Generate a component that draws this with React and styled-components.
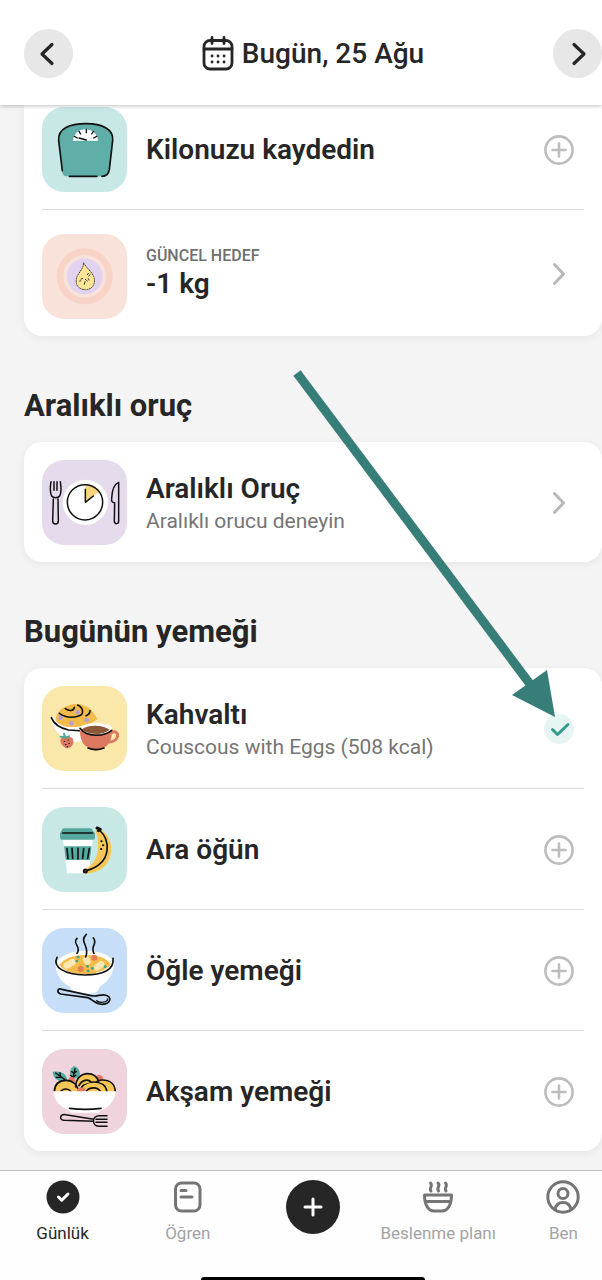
import React, { useState } from "react";
import styled, { createGlobalStyle } from "styled-components";

const GlobalStyle = createGlobalStyle`
  * {
    box-sizing: border-box;
  }

  body {
    margin: 0;
    background: #f4f4f4;
    color: #262626;
    font-family: Roboto, "Noto Sans", "Liberation Sans", sans-serif;
    overflow-x: hidden;
  }

  button {
    font: inherit;
    color: inherit;
    border: none;
    padding: 0;
    background: none;
    cursor: pointer;
  }
`;

const Page = styled.div`
  min-height: 100vh;
  display: flex;
  flex-direction: column;
  overflow: hidden;
`;

const Header = styled.header`
  position: relative;
  z-index: 2;
  display: flex;
  align-items: center;
  justify-content: space-between;
  padding: 29px 0 27px 24px;
  background: #fff;
  box-shadow: 0 1px 4px rgba(0, 0, 0, 0.25);
`;

const RoundButton = styled.button`
  display: flex;
  width: 49px;
  height: 49px;
  border-radius: 50%;
  background: #e7e7e7;
`;

const DateButton = styled.button`
  display: flex;
  align-items: center;
  gap: 8px;
  font-size: 28px;
  font-weight: 500;
  line-height: 36px;
`;

const Content = styled.main`
  position: relative;
  flex: 1;
  padding: 0 0 18px 24px;
`;

const SectionTitle = styled.h2`
  margin: 52px 0 18px;
  font-size: 31px;
  font-weight: 700;
  line-height: 36px;
`;

const Card = styled.section`
  padding: 0 18px;
  background: #fff;
  border-radius: ${({ $continued }) => ($continued ? "0 0 18px 18px" : "18px")};
  box-shadow: 0 2px 10px rgba(0, 0, 0, 0.06);
`;

const Tile = styled.svg`
  flex: none;
  width: 85px;
  height: 85px;
  border-radius: 22px;
  background: ${({ $color }) => $color};
  fill: none;
  stroke-linecap: round;
  stroke-linejoin: round;
`;

const Row = styled.div`
  display: flex;
  align-items: center;
  gap: 19px;
  min-height: ${({ $tall }) => ($tall ? "126px" : "0")};
  padding: ${({ $first }) => ($first ? "2px" : "18px")} 10px 17px 0;
  border-bottom: 1px solid #dedede;

  &:last-child {
    border-bottom: none;
  }

  ${Tile} {
    align-self: flex-end;
  }
`;

const RowText = styled.div`
  flex: 1;
  min-width: 0;
`;

const Eyebrow = styled.div`
  color: #6f6f6f;
  font-size: 16px;
  font-weight: 500;
  line-height: 20px;
  text-transform: uppercase;
`;

const RowTitle = styled.h3`
  margin: 0;
  font-size: 28px;
  font-weight: 600;
  line-height: 36px;
`;

const RowSubtitle = styled.div`
  color: #757575;
  font-size: 21px;
  line-height: 28px;
`;

const ActionButton = styled.button`
  flex: none;
  display: flex;
  width: 30px;
  height: 30px;
  border-radius: 50%;
  background: ${({ $done }) => ($done ? "#e6f5f3" : "none")};
`;

const StrokeIcon = styled.svg`
  display: block;
  flex: none;
  fill: none;
  stroke: ${({ $color }) => $color || "currentColor"};
  stroke-width: ${({ $weight }) => $weight || 3};
  stroke-linecap: round;
  stroke-linejoin: round;
`;

const Pointer = styled.svg`
  position: absolute;
  top: 265px;
  right: 44px;
  pointer-events: none;
`;

const TabBar = styled.nav`
  display: flex;
  flex-direction: column;
  align-items: center;
  gap: 32px;
  background: #fefefe;
  border-top: 1px solid #bdbdbd;
`;

const Tabs = styled.div`
  align-self: stretch;
  display: grid;
  grid-template-columns: repeat(5, 1fr);
  margin-right: -24px;
  padding-top: 9px;
`;

const Tab = styled.button`
  display: flex;
  flex-direction: column;
  align-items: center;
  gap: 8px;
  height: 65px;
  color: ${({ $active }) => ($active ? "#262626" : "#a3a3a3")};
  font-size: 17px;
  line-height: 22px;
  white-space: nowrap;
`;

const HomeIndicator = styled.div`
  width: 224px;
  height: 3px;
  margin-left: 24px;
  border-radius: 3px 3px 0 0;
  background: #000;
`;

const ScaleArt = () => (
  <Tile viewBox="36 36 255 255" $color="#c8e8e6" aria-hidden="true">
    <path fill="#5fafa8" d="M86 130C85 96 122 85 168 85s83 15 81 47l-11 92c-1 13-8 20-20 20H112c-11 0-16-7-17-19z" />
    <path stroke="#111" strokeWidth="5" d="M97 227 86 137C83 99 121 86 168 86s83 16 80 50l-10 88c-2 13-9 20-22 20M118 244h83" />
    <path fill="#fff" d="M129 137c2-21 18-34 37-34s36 13 38 34z" />
    <path stroke="#111" strokeWidth="4" d="m133 124 9 5m5-20 5 8m17-14v10m21-4-5 8m15 7-9 5m-44 0 22 6" />
  </Tile>
);

const GoalArt = () => (
  <Tile viewBox="36 39 255 255" $color="#f9e2da" aria-hidden="true">
    <circle cx="164" cy="166" r="74" stroke="#f8d3c7" strokeWidth="20" />
    <circle cx="164" cy="166" r="54" fill="#e1d3ef" />
    <path fill="#fbe697" stroke="#4a4030" strokeWidth="3" strokeDasharray="3 4" d="M161 126c6 14 27 25 32 47 3 20-9 33-27 33-19 0-30-14-27-32 3-16 20-27 22-48z" />
    <path stroke="#333" strokeWidth="3" d="m154 174 4-2m-8 9 1-4m12 13 2-8m1-7 6 5m3-23-3 4m9-1-5 5m-1 8 2 4" />
  </Tile>
);

const FastingArt = () => (
  <Tile viewBox="36 30 255 255" $color="#e6dbed" aria-hidden="true">
    <circle cx="166" cy="157" r="68" fill="#fff" />
    <path fill="#f7d47e" d="M167 157v-54c15 0 32 7 43 20z" />
    <g stroke="#111" strokeWidth="4.5">
      <circle cx="165" cy="157" r="53" />
      <path d="M166 118v39l24-19" />
      <path d="M63 95c-3 20-3 35 2 43 5 7 19 7 24 0 5-8 5-23 2-43M72 95v26m9-26v26M70 147l-2 65c0 13 17 13 17 0l-1-65" />
      <path d="M266 97v116c0 10-13 11-13 0l1-55c-8 0-10-4-9-13 1-22 7-43 21-48z" />
    </g>
  </Tile>
);

const BreakfastArt = () => (
  <Tile viewBox="36 35 255 255" $color="#f9e8aa" aria-hidden="true">
    <path fill="#fff" d="M64 133c4 34 28 60 69 70l35-5 20-70c-40-20-90-18-124 5z" />
    <path fill="#f2bc4b" d="M76 137c1-25 25-44 57-48 36-3 56 20 70 45-20 15-40 23-67 24-28 1-48-3-60-21z" />
    <g fill="#b5a0d6">
      <circle cx="92" cy="130" r="7" />
      <circle cx="124" cy="147" r="7" />
      <circle cx="143" cy="114" r="7" />
      <circle cx="170" cy="137" r="7" />
    </g>
    <path stroke="#111" strokeWidth="5" d="M64 130c8 20 27 32 52 37l44 3M88 117c17 12 40 14 58 8 18-5 14-25-3-33M106 103c11 8 25 8 27-4M180 109c0 8-4 12-12 15" />
    <path stroke="#dc7960" strokeWidth="9" d="M245 174c24-9 26 27-8 29" />
    <path fill="#dc7960" d="M149 162c1 32 8 50 25 57 12 13 38 13 50 0 16-8 22-28 23-57z" />
    <ellipse cx="198" cy="163" rx="49" ry="17" fill="#fff" />
    <path fill="#8c5838" d="M155 165c22-14 61-14 84 1-20 18-66 16-84-1z" />
    <path stroke="#111" strokeWidth="5" d="M150 162c20 28 73 25 95 6M174 221c14 6 34 5 48 0" />
    <path fill="#dc7960" d="M91 196c7-13 31-14 38-2 5 16-6 27-18 28-10-3-20-12-20-26z" />
    <path stroke="#4da69b" strokeWidth="5" d="m91 187 12 2-1-12 5 13 11-5" />
    <path stroke="#111" strokeWidth="3.5" d="M103 201h1m10-4h1m-8 14h1m9-4h1m-6 10h1" />
  </Tile>
);

const SnackArt = () => (
  <Tile viewBox="36 38 255 255" $color="#c8e8e6" aria-hidden="true">
    <path fill="#fff" d="M99 134h90l-13 103h-65z" />
    <path fill="#55a89e" d="M96 107q0-5 6-5h79q6 0 6 5l8 10v14q0 5-6 5H96q-6 0-6-5v-14zM102 156h83l-5 41h-73z" />
    <path stroke="#111" strokeWidth="5" d="M98 116h90m-77 47 3 29m12-30 2 30m16-30v32m17-31-3 29m20-29-5 29" />
    <path fill="#f6c756" d="M197 108l18 0c19 12 30 34 29 60-3 42-32 69-77 70l-7-8c24-15 40-33 43-60 3-24-1-43-6-62z" />
    <path stroke="#111" strokeWidth="5" d="M208 107c19 17 26 39 23 62-4 31-27 50-61 60" />
    <path stroke="#111" strokeWidth="9" d="m201 101 10 4-6 4" />
    <circle cx="166" cy="230" r="5" fill="#665024" stroke="#111" strokeWidth="5" />
    <path stroke="#111" strokeWidth="6" d="M214 141h1m4 12h1m-7 11h1" />
  </Tile>
);

const LunchArt = () => (
  <Tile viewBox="36 40 255 255" $color="#c6def8" aria-hidden="true">
    <path fill="#fff" d="M77 148c10-24 45-40 89-40 46 0 78 15 87 38-2 32-21 58-44 70-4 16-13 21-44 21-29 0-39-6-45-21-23-10-43-35-43-68z" />
    <path fill="#f3bb48" d="M88 151c14-20 42-30 80-30 36 0 61 9 75 28-29 37-124 41-155 2z" />
    <path stroke="#fbe7b2" strokeWidth="20" d="m110 153 17-10m42-9 3 7m29 17 12-9" />
    <g fill="#e37c57">
      <circle cx="193" cy="129" r="9" />
      <circle cx="152" cy="163" r="9" />
    </g>
    <path stroke="#43a485" strokeWidth="8" d="M144 127h1m-5 12h1m31 16h1m14 6h1m-14 8h1m50-13h1" />
    <path stroke="#111" strokeWidth="5" d="M81 128c-14 29 22 52 84 53 52 0 89-15 84-50M141 71c-16 17 15 23 0 45M169 59c-24 23 13 35-2 68M190 70c15 18-11 24 2 46" />
    <path stroke="#111" strokeWidth="5" d="m95 224 88 19c16 4 28-4 41-2 25 4 18 27-7 28-23 0-28-15-44-20l-81-11c-13-4-10-20 3-14z" />
    <path stroke="#111" strokeWidth="4" d="M200 258c8 8 32 6 33-5" />
  </Tile>
);

const DinnerArt = () => (
  <Tile viewBox="36 28 255 255" $color="#efd4de" aria-hidden="true">
    <g fill="#55a89e">
      <path d="M109 124c-21 4-40-6-41-28 28-4 43 7 44 28zM123 110c-7-14-2-25 11-31 14 8 18 18 14 30-8 10-18 10-25 1z" />
    </g>
    <path stroke="#111" strokeWidth="4" d="m77 100 28 20m-15-21 1 11m-13 3 18 0m33 2 6-28m-10 9 8 5 6-6m-18 12 8 5 8-5" />
    <circle cx="207" cy="119" r="13" fill="#e2785f" />
    <circle cx="125" cy="122" r="10" fill="#e2785f" />
    <g fill="#f6c756" stroke="#111" strokeWidth="5">
      <path d="M137 142c0-27 18-40 36-40 16 0 28 9 33 24M188 156c-3-21 10-35 29-35 23 0 38 13 39 35M73 156c1-24 15-34 35-34s36 14 37 34" />
      <path d="M151 157c1-20 18-30 39-30 22 0 39 10 41 30" />
      <path d="M93 154c8-8 22-8 29 1m25-17c8-18 28-21 36-11m-14 27c10-12 34-13 42 1" />
    </g>
    <path fill="#e2785f" d="M141 158v-10l10-5 16 4-5 11z" />
    <path fill="#fff" d="M69 155h189c-4 32-26 52-46 57l-4 7h-87l-5-7c-22-8-44-28-47-57z" />
    <path stroke="#111" strokeWidth="5" d="M119 206c29 4 67 4 94 0" />
    <path stroke="#111" strokeWidth="4.5" d="m191 239-84-14c-18-2-21 16-4 17l88 3M231 228h-22c-25 0-25 32 0 32h22M198 239h33m-33 9h33" />
  </Tile>
);

const PlusIcon = () => (
  <StrokeIcon width="30" height="30" viewBox="0 0 30 30" $color="#bdbdbd" $weight="2.6">
    <circle cx="15" cy="15" r="13.6" />
    <path d="M15 8.5v13M8.5 15h13" />
  </StrokeIcon>
);

const ChevronIcon = () => (
  <StrokeIcon width="30" height="30" viewBox="0 0 30 30" $color="#b8b8b8">
    <path d="m10.5 5.5 9 9.5-9 9.5" />
  </StrokeIcon>
);

const CheckIcon = () => (
  <StrokeIcon width="30" height="30" viewBox="0 0 30 30" $color="#379a8c">
    <path d="m8.5 15.5 5 5L24 10.5" />
  </StrokeIcon>
);

const CalendarIcon = () => (
  <StrokeIcon width="32" height="36" viewBox="0 0 32 36" $weight="2.8">
    <rect x="2" y="4.5" width="28" height="28.5" rx="6" />
    <path d="M2 13h28M10 1.5v6M22 1.5v6" />
    <path d="M10 20h.1M16 20h.1M22 20h.1M10 26h.1M16 26h.1M22 26h.1" />
  </StrokeIcon>
);

const meals = [
  { id: "breakfast", title: "Kahvaltı", subtitle: "Couscous with Eggs (508 kcal)", art: <BreakfastArt /> },
  { id: "snack", title: "Ara öğün", art: <SnackArt /> },
  { id: "lunch", title: "Öğle yemeği", art: <LunchArt /> },
  { id: "dinner", title: "Akşam yemeği", art: <DinnerArt /> },
];

const tabs = [
  {
    id: "diary",
    label: "Günlük",
    icon: (
      <StrokeIcon width="34" height="34" viewBox="0 0 34 34" $color="#fff">
        <circle cx="17" cy="17" r="16.5" fill="#262626" stroke="none" />
        <path d="m12.5 17 3.2 3.2L22 14" />
      </StrokeIcon>
    ),
  },
  {
    id: "learn",
    label: "Öğren",
    icon: (
      <StrokeIcon width="34" height="34" viewBox="0 0 34 34" $color="#757575">
        <rect x="4.5" y="3" width="24.5" height="28" rx="6" />
        <path d="M10 10.5h5M10 17h11" />
      </StrokeIcon>
    ),
  },
  {
    id: "add",
    label: "",
    icon: (
      <StrokeIcon width="54" height="54" viewBox="0 0 54 54" $color="#fff">
        <circle cx="27" cy="27" r="27" fill="#262626" stroke="none" />
        <path d="M27 19v16M19 27h16" />
      </StrokeIcon>
    ),
  },
  {
    id: "plan",
    label: "Beslenme planı",
    icon: (
      <StrokeIcon width="34" height="34" viewBox="0 0 34 34" $color="#757575">
        <path d="M3.5 15h27c0 10-4 16-9.500 16h-8C7.500 31 3.500 25 3.500 15zM4.500 21.500h25" />
        <path d="M9.500 3c3 3-2 5 .5 8M17 3c3 3-2 5 .5 8M24.500 3c3 3-2 5 .5 8" />
      </StrokeIcon>
    ),
  },
  {
    id: "me",
    label: "Ben",
    icon: (
      <StrokeIcon width="34" height="34" viewBox="0 0 34 34" $color="#757575">
        <circle cx="17" cy="17" r="15.2" />
        <circle cx="17" cy="13.5" r="5" />
        <path d="M9 29.5c1-5 4-7 8-7s7 2 8 7" />
      </StrokeIcon>
    ),
  },
];

const App = () => {
  const [activeTab, setActiveTab] = useState("diary");
  const [logged, setLogged] = useState({ breakfast: true });

  const toggleMeal = (id) => {
    setLogged((prev) => ({ ...prev, [id]: !prev[id] }));
  };

  return (
    <Page>
      <GlobalStyle />
      <Header>
        <RoundButton type="button" aria-label="Önceki gün">
          <StrokeIcon width="49" height="49" viewBox="0 0 49 49" $weight="3.2">
            <path d="m28 15.5-10 9.5 10 9.5" />
          </StrokeIcon>
        </RoundButton>
        <DateButton type="button">
          <CalendarIcon />
          Bugün, 25 Ağu
        </DateButton>
        <RoundButton type="button" aria-label="Sonraki gün">
          <StrokeIcon width="49" height="49" viewBox="0 0 49 49" $weight="3.2">
            <path d="m21 15.5 10 9.5-10 9.5" />
          </StrokeIcon>
        </RoundButton>
      </Header>

      <Content>
        <Card $continued>
          <Row $first>
            <ScaleArt />
            <RowText>
              <RowTitle>Kilonuzu kaydedin</RowTitle>
            </RowText>
            <ActionButton type="button" aria-label="Kilonuzu kaydedin">
              <PlusIcon />
            </ActionButton>
          </Row>
          <Row $tall>
            <GoalArt />
            <RowText>
              <Eyebrow>Güncel hedef</Eyebrow>
              <RowTitle>-1 kg</RowTitle>
            </RowText>
            <ActionButton type="button" aria-label="Güncel hedef">
              <ChevronIcon />
            </ActionButton>
          </Row>
        </Card>

        <SectionTitle>Aralıklı oruç</SectionTitle>
        <Card>
          <Row>
            <FastingArt />
            <RowText>
              <RowTitle>Aralıklı Oruç</RowTitle>
              <RowSubtitle>Aralıklı orucu deneyin</RowSubtitle>
            </RowText>
            <ActionButton type="button" aria-label="Aralıklı Oruç">
              <ChevronIcon />
            </ActionButton>
          </Row>
        </Card>

        <SectionTitle>Bugünün yemeği</SectionTitle>
        <Card>
          {meals.map((meal) => (
            <Row key={meal.id}>
              {meal.art}
              <RowText>
                <RowTitle>{meal.title}</RowTitle>
                {meal.subtitle && <RowSubtitle>{meal.subtitle}</RowSubtitle>}
              </RowText>
              <ActionButton
                type="button"
                aria-label={meal.title}
                aria-pressed={!!logged[meal.id]}
                $done={logged[meal.id]}
                onClick={() => toggleMeal(meal.id)}
              >
                {logged[meal.id] ? <CheckIcon /> : <PlusIcon />}
              </ActionButton>
            </Row>
          ))}
        </Card>

        <Pointer width="266" height="350" viewBox="292 370 266 350" aria-hidden="true">
          <path d="M297 373 530 684" stroke="#377d78" strokeWidth="9" />
          <path d="m555 717-43-22 35-25z" fill="#377d78" />
        </Pointer>
      </Content>

      <TabBar>
        <Tabs>
          {tabs.map((tab) => (
            <Tab
              key={tab.id}
              type="button"
              aria-label={tab.label || "Ekle"}
              $active={activeTab === tab.id}
              onClick={() => setActiveTab(tab.id)}
            >
              {tab.icon}
              {tab.label && <span>{tab.label}</span>}
            </Tab>
          ))}
        </Tabs>
        <HomeIndicator />
      </TabBar>
    </Page>
  );
};

export default App;
